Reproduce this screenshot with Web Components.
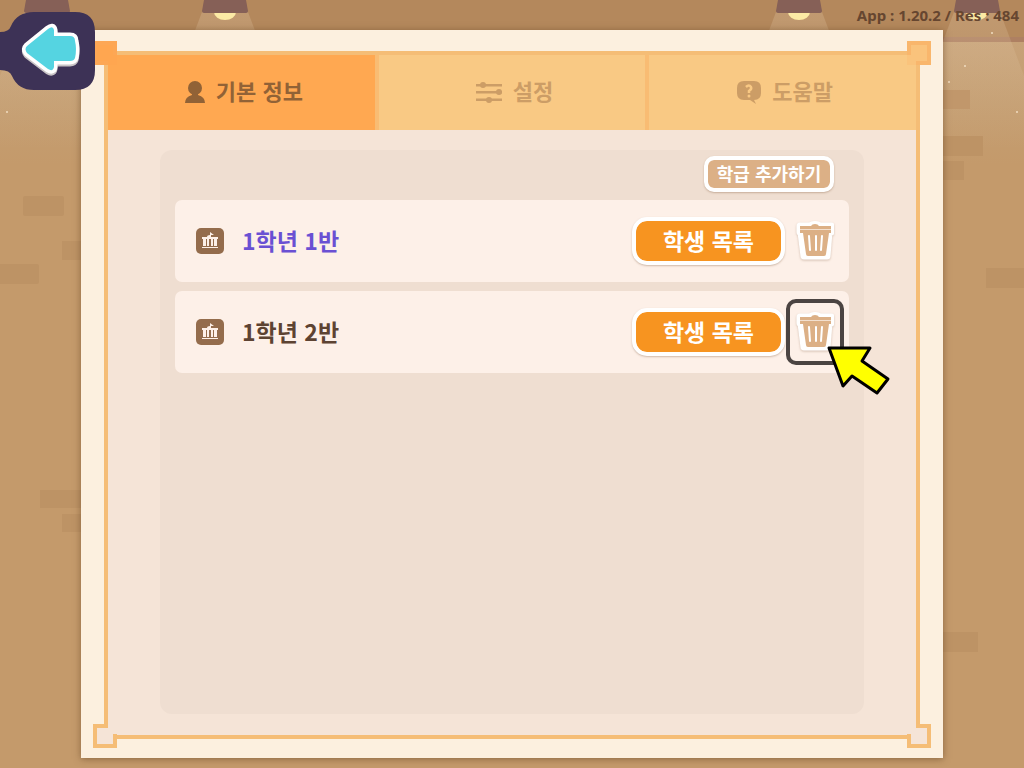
<!DOCTYPE html>
<html lang="ko">
<head>
<meta charset="utf-8">
<meta name="viewport" content="width=device-width, initial-scale=1">
<title>기본 정보</title>
<style>
  body { margin: 0; font-family: "Noto Sans CJK KR", "Noto Sans", sans-serif; background: #c49a6b; }
</style>
</head>
<body>
<class-app></class-app>

<script>
const define = (name, markup) => {
  const template = document.createElement('template');
  template.innerHTML = markup;
  customElements.define(name, class extends HTMLElement {
    constructor() {
      super();
      this.attachShadow({ mode: 'open' }).append(template.content.cloneNode(true));
    }
  });
};

/* Wall, lamps and bricks behind everything */
define('room-scene', `
<style>
  :host { display: block; overflow: hidden; }
  svg { display: block; width: 100%; height: 100%; }
</style>
<svg viewBox="0 0 1024 768" preserveAspectRatio="xMidYMin slice" aria-hidden="true">
  <defs>
    <linearGradient id="wall" x1="0" y1="0" x2="0" y2="1">
      <stop offset="0" stop-color="#c7a278"/><stop offset=".08" stop-color="#c49e72"/><stop offset=".17" stop-color="#c49a6b"/>
    </linearGradient>
    <linearGradient id="beam" x1="0" y1="0" x2="0" y2="1">
      <stop offset="0" stop-color="#e8cfae" stop-opacity=".25"/><stop offset="1" stop-color="#e8cfae" stop-opacity="0"/>
    </linearGradient>
    <g id="lamp">
      <path d="M0 12 L-52 150 H98 L46 12Z" fill="url(#beam)"/>
      <ellipse cx="23" cy="12" rx="11" ry="8" fill="#fbeaa5"/>
      <path d="M2 0H44L46 11Q46 13 44 13H2Q0 13 0 11Z" fill="#866057"/>
    </g>
  </defs>
  <rect width="1024" height="768" fill="#c49a6b"/>
  <rect y="41" width="1024" height="727" fill="url(#wall)"/>
  <rect width="1024" height="38" fill="#b4885c"/>
  <rect y="37" width="1024" height="5" fill="#ae8062"/>
  <use href="#lamp" x="24"/><use href="#lamp" x="202"/><use href="#lamp" x="776"/><use href="#lamp" x="954"/>
  <g fill="#bd9365">
    <rect x="23" y="196" width="41" height="20" rx="2"/><rect x="62" y="241" width="30" height="19"/>
    <rect x="-4" y="264" width="43" height="20" rx="2"/><rect x="40" y="490" width="50" height="18"/>
    <rect x="62" y="514" width="30" height="18"/><rect x="930" y="90" width="40" height="19" fill="#c1976b"/>
    <rect x="930" y="136" width="53" height="20"/><rect x="930" y="161" width="34" height="19"/>
    <rect x="986" y="268" width="50" height="20"/><rect x="930" y="632" width="48" height="20"/>
  </g>
  <g fill="#f0dcc0"><circle cx="992" cy="33" r="1"/><circle cx="965" cy="66" r="1"/><circle cx="949" cy="82" r="1"/><circle cx="1017" cy="112" r="1"/><circle cx="7" cy="112" r="1"/></g>
</svg>`);

define('back-button', `
<style>
  :host { display: block; }
  button { display: block; padding: 0; border: 0; background: none; cursor: pointer; }
  svg { display: block; }
</style>
<button type="button" aria-label="뒤로">
  <svg width="96" height="92" viewBox="0 0 96 92">
    <path d="M0 32Q9 32 11 26Q17 12 34 12H75Q95 12 95 32V70Q95 90 75 90H34Q18 90 12 76Q10 70 0 70Z" fill="#3d3256"/>
    <g stroke-linejoin="round">
      <path d="M27 46L48 29Q53 25 54 30V36H70Q75 36 75 41Q77 49 75 58Q74 61 70 61H54V67Q53 72 48 69L27 53Q24 49 27 46Z" fill="#c9c4c6" stroke="#c9c4c6" stroke-width="7" transform="translate(0 2)"/>
      <path d="M27 46L48 29Q53 25 54 30V36H70Q75 36 75 41Q77 49 75 58Q74 61 70 61H54V67Q53 72 48 69L27 53Q24 49 27 46Z" fill="#55d4e1" stroke="#fff" stroke-width="7"/>
      <path d="M27 46L48 29Q53 25 54 30V36H70Q75 36 75 41Q77 49 75 58Q74 61 70 61H54V67Q53 72 48 69L27 53Q24 49 27 46Z" fill="#55d4e1"/>
    </g>
  </svg>
</button>`);

/* Notched corner of the frame, drawn for the top left */
define('frame-corner', `
<style>
  :host { display: block; width: 24px; height: 24px; }
  svg { display: block; }
  .fill { fill: var(--corner-fill, #f5e4d7); }
  .line { fill: none; stroke: var(--corner-line, #f5bd76); stroke-width: 4; }
</style>
<svg width="24" height="24" viewBox="0 0 24 24" aria-hidden="true">
  <path class="fill" d="M2 2H24V24H2Z"/>
  <path d="M24 0V10H26V0ZM0 24H11V26H0Z" fill="#fcf0df"/>
  <path class="line" d="M13 24V22H2V2H22V12H24"/>
</svg>`);

define('ornate-frame', `
<style>
  :host { display: flex; flex-direction: column; box-sizing: border-box; padding: 21px 23px 19px; background: #fcf0df; box-shadow: 0 1px 7px rgba(90, 60, 30, .55); }
  .frame { position: relative; flex: 1; display: flex; flex-direction: column; border: 4px solid #f5bd76; background: #f5e4d7; }
  frame-corner { position: absolute; }
  .tl { left: -15px; top: -14px; --corner-fill: #ffa650; --corner-line: #fda755; }
  .tr { right: -15px; top: -14px; transform: scaleX(-1); --corner-fill: #fac37c; --corner-line: #f9b66c; }
  .bl { left: -15px; bottom: -13px; transform: scaleY(-1); }
  .br { right: -15px; bottom: -13px; transform: scale(-1); }
</style>
<div class="frame">
  <slot></slot>
  <frame-corner class="tl"></frame-corner><frame-corner class="tr"></frame-corner>
  <frame-corner class="bl"></frame-corner><frame-corner class="br"></frame-corner>
</div>`);

define('tab-bar', `
<style>
  :host { display: grid; grid-template-columns: repeat(3, 1fr); gap: 4px; height: 75px; background: #f9bc73; }
</style>
<slot></slot>`);

define('tab-item', `
<style>
  :host { display: flex; --tab-bg: #f9c984; --tab-fg: #cc9d66; }
  :host([active]) { --tab-bg: #ffa851; --tab-fg: #916236; }
  button { flex: 1; display: flex; align-items: center; justify-content: center; gap: 10px; padding: 0 0 2px 4px; border: 0; background: var(--tab-bg); color: var(--tab-fg); font: bold 22px/32px "Noto Sans CJK KR", sans-serif; cursor: pointer; }
  .label { padding-bottom: 4px; }
</style>
<button type="button"><slot name="icon"></slot><span class="label"><slot></slot></span></button>`);

define('school-icon', `
<style>:host { display: block; } svg { display: block; }</style>
<svg width="28" height="26" viewBox="0 0 28 26" aria-hidden="true">
  <rect width="28" height="26" rx="5" fill="#946c4c"/>
  <path d="M14 4L18 7H15V9H22V11H21V18H18V11H17V18H15V11H13V18H11V11H10V18H7V11H6V9H11Q11 7 14 7ZM6 19H22V20H6Z" fill="#fdf0e8"/>
</svg>`);

define('trash-button', `
<style>
  :host { display: block; position: relative; }
  button { display: block; padding: 0; border: 0; background: none; cursor: pointer; }
  svg { display: block; filter: drop-shadow(0 1px 1px rgba(120, 80, 50, .3)); }
  .focus { display: none; position: absolute; inset: -12px -10px; border: 4px solid #4b4442; border-radius: 10px; pointer-events: none; }
  :host([targeted]) .focus { display: block; }
</style>
<button type="button" aria-label="삭제">
  <svg width="38" height="42" viewBox="0 0 38 42">
    <path d="M4 6H14Q19 3 24 6H35V12H33L31 36H8L5 12H4Z" fill="#fff" stroke="#fff" stroke-width="7" stroke-linejoin="round"/>
    <path d="M4 6H15Q16 4 19 4Q22 4 23 6H35V9H4ZM4 10H35V13H4Z" fill="#dcb086"/>
    <path d="M4 9H35V10H4Z" fill="#f3e0cf"/>
    <path d="M7 13H33L30 34Q30 36 28 36H12Q10 36 10 34Z" fill="#dcb086"/>
    <path d="M13 16L14 30M20 16V30M26 16L25 30" stroke="#fff" stroke-width="2" stroke-linecap="round"/>
  </svg>
</button>
<div class="focus"></div>`);

define('game-button', `
<style>
  :host { display: block; }
  button { display: block; box-sizing: border-box; width: 153px; height: 48px; padding: 0 0 2px; border: 4px solid #fff; border-radius: 15px; background: #f79420; color: #fff; font: bold 23px/36px "Noto Sans CJK KR", sans-serif; box-shadow: 0 1px 2px rgba(120, 80, 50, .35); cursor: pointer; background-clip: padding-box; }
  :host([small]) button { width: 130px; height: 36px; border-radius: 10px; background-color: #dcb086; font-size: 18px; line-height: 26px; }
</style>
<button type="button"><slot></slot></button>`);

define('class-row', `
<style>
  :host { display: flex; align-items: center; box-sizing: border-box; height: 82px; padding: 0 15px 0 21px; border-radius: 7px; background: #fdf0e8; color: #5d4332; }
  :host([selected]) { color: #6a50d3; }
  .name { flex: 1; margin-left: 18px; padding-bottom: 2px; font: bold 23px/36px "Noto Sans CJK KR", sans-serif; }
  .target { position: relative; }
</style>
<school-icon></school-icon>
<span class="name"><slot></slot></span>
<game-button>학생 목록</game-button>
<div class="target"><slot name="trash"></slot></div>`);

define('pointer-arrow', `
<style>:host { display: block; } svg { display: block; }</style>
<svg width="64" height="52" viewBox="0 0 64 52" aria-hidden="true">
  <path d="M2 3L43 3L35 16L61 34L50 48L25 31L16 41Z" fill="#ff0" stroke="#000" stroke-width="3" stroke-linejoin="round"/>
</svg>`);

define('class-list', `
<style>
  :host { display: flex; flex-direction: column; flex: 1; margin: 20px 52px 21px; padding: 6px 15px 15px; border-radius: 12px; background: #efded1; }
  .tools { display: flex; justify-content: flex-end; padding-right: 15px; margin-bottom: 8px; }
  .rows { display: flex; flex-direction: column; gap: 9px; }
  .rows trash-button { margin-left: 11px; }
  pointer-arrow { position: absolute; left: 42px; top: 34px; z-index: 1; }
</style>
<div class="tools"><game-button small>학급 추가하기</game-button></div>
<div class="rows">
  <class-row selected>1학년 1반<trash-button slot="trash"></trash-button></class-row>
  <class-row>1학년 2반<trash-button slot="trash" targeted></trash-button><pointer-arrow slot="trash"></pointer-arrow></class-row>
</div>`);

define('class-app', `
<style>
  :host { position: relative; display: flex; flex-direction: column; min-height: 100vh; }
  room-scene { position: absolute; inset: 0; }
  header { position: relative; display: flex; justify-content: flex-end; height: 30px; padding-right: 5px; color: #664630; font: bold 15px/30px "Noto Sans", sans-serif; }
  ornate-frame { position: relative; flex: 1; margin: 0 81px 10px; }
  back-button { position: absolute; left: 0; top: 0; z-index: 1; }
</style>
<room-scene></room-scene>
<header><span>App : 1.20.2 / Res : 484</span></header>
<ornate-frame>
  <tab-bar>
    <tab-item active>
      <svg slot="icon" width="22" height="24" viewBox="0 0 22 24" fill="currentColor" aria-hidden="true"><circle cx="11" cy="8" r="7"/><path d="M8 12H14V15Q21 17 21 23H1Q1 17 8 15Z"/></svg>
      기본 정보
    </tab-item>
    <tab-item>
      <svg slot="icon" width="28" height="24" viewBox="0 0 28 24" fill="currentColor" aria-hidden="true"><path d="M1 4H27V6.500H1ZM1 11H27V13.500H1ZM1 18.500H27V21H1Z"/><circle cx="8" cy="5" r="3"/><circle cx="24" cy="12" r="3"/><circle cx="14" cy="20" r="3"/></svg>
      설정
    </tab-item>
    <tab-item>
      <svg slot="icon" width="26" height="24" viewBox="0 0 26 24" fill="currentColor" aria-hidden="true"><path d="M8 1H18Q25 1 25 8V13Q25 20 18 20L20 24L14 20H8Q1 20 1 13V8Q1 1 8 1Z"/><path d="M10 7Q13 4 15 7Q16 9 13 11V13" fill="none" stroke="#f9c984" stroke-width="2.500"/><circle cx="13" cy="16" r="1.500" fill="#f9c984"/></svg>
      도움말
    </tab-item>
  </tab-bar>
  <class-list></class-list>
</ornate-frame>
<back-button></back-button>`);
</script>
</body>
</html>
